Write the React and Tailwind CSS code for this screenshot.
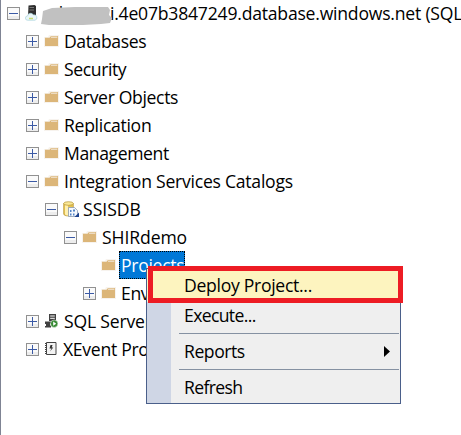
const FONT = "font-['Open_Sans','Noto_Sans',sans-serif]";

function Toggle({ open }) {
  return (
    <svg className="mt-[7px] h-[13px] w-[13px] shrink-0" viewBox="0 0 13 13" shapeRendering="crispEdges">
      <rect x="0.5" y="0.5" width="12" height="12" fill="#fafafa" stroke="#919191" />
      <path d="M1 9h11v3H1z" fill="#ededed" />
      <path d="M2 6h9v1H2z" fill="#3b5aa5" />
      {!open && <path d="M6 2h1v9H6z" fill="#3b5aa5" />}
    </svg>
  );
}

function Folder() {
  return (
    <svg className="mt-[6px] h-[14px] w-[16px] shrink-0" viewBox="0 0 16 14">
      <path d="M0 3h4l1-2h10v12H0z" fill="#f7f3ee" />
      <path d="M1 3.700h4.500L7 2h7v10H1z" fill="#dcb679" />
      <path d="M7 3.200h6.300" stroke="#f7f3ee" strokeWidth="0.900" />
    </svg>
  );
}

function ServerIcon() {
  return (
    <svg className="mt-[5px] h-[16px] w-[14px] shrink-0" viewBox="0 0 14 16">
      <path d="M3.500.5l6-.5 1.500 1v11H3z" fill="#2e2e2e" />
      <path d="M4.500 2.500h4.500M4.500 5h4.500" stroke="#8c8c8c" strokeWidth="0.800" />
      <path d="M2.500 15.200a2 2 0 010-4.200 3.200 3.200 0 016-1 2.700 2.700 0 011.500 5.200z" fill="#eaf6f8" stroke="#a7d3dc" strokeWidth="0.700" />
      <path d="M4 13.500h4" stroke="#c4dc72" strokeWidth="1.500" />
    </svg>
  );
}

function DatabaseIcon() {
  return (
    <svg className="mt-[5px] h-[17px] w-[17px] shrink-0" viewBox="0 0 17 17">
      <path d="M.7 2.500v10.500c0 2.600 9.600 2.600 9.600 0V2.500z" fill="#e8c552" stroke="#b59231" strokeWidth="0.700" />
      <path d="M2 4v9.500q1.500.9 3 .9V4z" fill="#fff0ae" />
      <ellipse cx="5.500" cy="2.500" rx="4.800" ry="1.800" fill="#fae896" stroke="#b59231" strokeWidth="0.700" />
      <path d="M5.500 6.500H11.500l3 3V15.500H5.500z" fill="#f5f9ff" stroke="#8a9bb3" strokeWidth="0.800" />
      <path d="M7 9h1.500v2H7zM10 8.500h2v2h-2zM7 12.500h1.500v2H7zM10 12.500h1.500v2H10z" fill="#5485c7" />
      <path d="M16 11.500v4.500H11.500z" fill="#1d438f" />
    </svg>
  );
}

function AgentIcon() {
  return (
    <svg className="mt-[5px] h-[15px] w-[15px] shrink-0" viewBox="0 0 15 15">
      <path d="M5 1h7v7H5z" fill="#414141" />
      <path d="M6.200 3h4.600M6.200 5.300h4.600" stroke="#fff" />
      <path d="M1 8.500h6v2H6v2h1v2H1v-1.500h1v-2H1z" fill="#414141" />
      <circle cx="10.200" cy="10.700" r="3.700" fill="#388a34" stroke="#fff" strokeWidth="0.500" />
      <path d="M9.200 8.600l3 2.100-3 2.100z" fill="#fff" />
    </svg>
  );
}

function EventIcon() {
  return (
    <svg className="mt-[6px] h-[14px] w-[13px] shrink-0" viewBox="0 0 13 14">
      <path d="M2.500.5h9.500v12H2.500z" fill="#f3f3f3" stroke="#444" />
      <path d="M1.500 1v12" stroke="#444" strokeDasharray="1 1" />
      <path d="M8.500 3h-2L5.500 6.500h2L6 9.500 9.300 5.500H7.800z" fill="#333" />
    </svg>
  );
}

function Row({ indent, open, icon, gap = "gap-[4px]", children }) {
  return (
    <div className={`flex h-7 items-start ${indent}`}>
      {open === undefined ? <span className="w-[13px] shrink-0" /> : <Toggle open={open} />}
      <span className={`ml-[5px] flex items-start ${gap}`}>
        {icon}
        {children}
      </span>
    </div>
  );
}

function Label({ className = "tracking-[-0.35px]", children }) {
  return <span className={`-mt-px whitespace-nowrap text-[17.6px] leading-7 ${className}`}>{children}</span>;
}

function MenuItem({ className = "", label, spacing, submenu }) {
  return (
    <div className={`flex items-center pl-[37px] text-[17.6px] ${className}`}>
      <span className={`whitespace-nowrap ${spacing}`}>{label}</span>
      {submenu && (
        <svg className="mr-[10px] ml-auto h-[11px] w-[6px]" viewBox="0 0 6 11">
          <path d="M0 0l6 5.500L0 11z" fill="#000" />
        </svg>
      )}
    </div>
  );
}

function ContextMenu() {
  return (
    <div className="absolute top-[268px] left-[145px] h-[136px] w-[255px] border border-[#4a5f8a] bg-[linear-gradient(90deg,#cfd6e5_24px,#efefef_24px)]">
      <MenuItem className="h-[33px] bg-[#fdf4bf]" label="Deploy Project..." spacing="tracking-[-0.3px]" />
      <MenuItem className="h-[31px] pb-[5px]" label="Execute..." spacing="tracking-[-0.65px]" />
      <div className="mr-px ml-8 h-px bg-[#8591a2]" />
      <MenuItem className="h-[35px]" label="Reports" spacing="tracking-[-0.45px]" submenu />
      <div className="mr-px ml-8 h-px bg-[#8591a2]" />
      <MenuItem className="h-[33px] pt-[2px]" label="Refresh" spacing="tracking-[-0.65px]" />
    </div>
  );
}

export default function App() {
  return (
    <main className={`relative h-[435px] w-[461px] overflow-hidden border-l border-[#7f8494] bg-white text-black ${FONT}`}>
      <Row indent="pl-[6px]" open icon={<ServerIcon />} gap="gap-[2px]">
        <span className="relative flex">
          <Label className="ml-[8px] w-[14px]">al</Label>
          <Label className="ml-[47px] tracking-[-0.22px]">i.4e07b3847249.database.windows.net (SQL</Label>
          <svg className="absolute top-[7px] left-0 h-[19px] w-[74px]" viewBox="0 0 74 19">
            <path d="M2 4l9-3 23-1h33l2 3-1 5 3 3-2 5-9 1-18 1H8l-8-1 1-5z" fill="#c1c1c1" />
          </svg>
        </span>
      </Row>
      <Row indent="pl-[25px]" open={false} icon={<Folder />}><Label className="tracking-[-0.4px]">Databases</Label></Row>
      <Row indent="pl-[25px]" open={false} icon={<Folder />}><Label className="tracking-[-0.4px]">Security</Label></Row>
      <Row indent="pl-[25px]" open={false} icon={<Folder />}><Label>Server Objects</Label></Row>
      <Row indent="pl-[25px]" open={false} icon={<Folder />}><Label className="tracking-[-0.3px]">Replication</Label></Row>
      <Row indent="pl-[25px]" open={false} icon={<Folder />}><Label className="tracking-[-0.4px]">Management</Label></Row>
      <Row indent="pl-[25px]" open icon={<Folder />}><Label className="tracking-[-0.25px]">Integration Services Catalogs</Label></Row>
      <Row indent="pl-[44px]" open icon={<DatabaseIcon />} gap="gap-[3px]"><Label className="tracking-[0px]">SSISDB</Label></Row>
      <Row indent="pl-[63px]" open icon={<Folder />}><Label className="tracking-[-0.1px]">SHIRdemo</Label></Row>
      <Row indent="pl-[82px]" icon={<Folder />} gap="gap-[2px]">
        <span className="mt-[-1px] w-[66px] border border-dotted border-black bg-[#0078d7] pl-px text-[17.6px] leading-[26px] tracking-[-0.3px] whitespace-nowrap text-white">Projects</span>
      </Row>
      <Row indent="pl-[82px]" open={false} icon={<Folder />}><Label>Environments</Label></Row>
      <Row indent="pl-[25px]" open={false} icon={<AgentIcon />} gap="gap-[5px]"><Label className="tracking-[-0.2px]">SQL Server Agent</Label></Row>
      <Row indent="pl-[25px]" open={false} icon={<EventIcon />} gap="gap-[6px]"><Label className="tracking-[-0.3px]">XEvent Profiler</Label></Row>
      <ContextMenu />
      <div className="absolute top-[266px] left-[147px] h-[37px] w-[255px] border-[5px] border-[#ed1c24]" />
    </main>
  );
}
